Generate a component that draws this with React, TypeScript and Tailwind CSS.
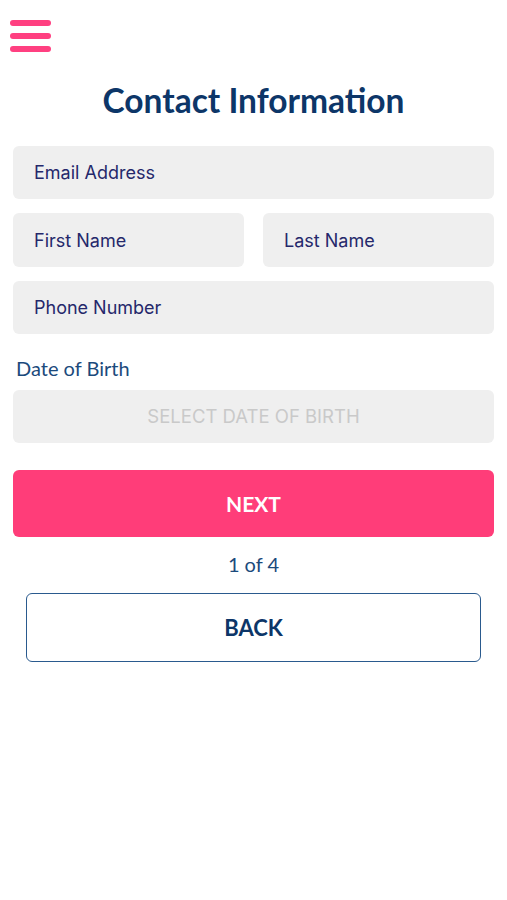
import React from "react";

export default function App() {
  return (
    <div className="w-[507px] h-[900px] bg-white" style={{ fontFamily: "Lato, 'Noto Sans', sans-serif" }}>
      <div className="pt-[20px] pl-[10px]">
        <div className="flex flex-col gap-[7px] w-[41px]">
          <div className="h-[6px] rounded-full bg-[#ff4081]" />
          <div className="h-[6px] rounded-full bg-[#ff4081]" />
          <div className="h-[6px] rounded-full bg-[#ff4081]" />
        </div>
      </div>
      <h1 className="mt-[28px] text-center text-[33.5px] leading-[40px] font-bold text-[#0d3668]">Contact Information</h1>
      <div className="px-[13px] mt-[26px] flex flex-col">
        <div className="h-[53px] rounded-[6px] bg-[#efefef] flex items-center pl-[21px] text-[18px] text-[#25286b]" style={{ fontFamily: "Inter, sans-serif" }}>Email Address</div>
        <div className="mt-[14px] flex gap-[19px]">
          <div className="flex-1 h-[54px] rounded-[6px] bg-[#efefef] flex items-center pl-[21px] text-[18px] text-[#25286b]" style={{ fontFamily: "Inter, sans-serif" }}>First Name</div>
          <div className="flex-1 h-[54px] rounded-[6px] bg-[#efefef] flex items-center pl-[21px] text-[18px] text-[#25286b]" style={{ fontFamily: "Inter, sans-serif" }}>Last Name</div>
        </div>
        <div className="mt-[14px] h-[53px] rounded-[6px] bg-[#efefef] flex items-center pl-[21px] text-[18px] text-[#25286b]" style={{ fontFamily: "Inter, sans-serif" }}>Phone Number</div>
        <div className="mt-[20px] pl-[3px] text-[20px] leading-[28px] text-[#1b4a7c]">Date of Birth</div>
        <div className="mt-[8px] h-[53px] rounded-[6px] bg-[#efefef] flex items-center justify-center text-[18.5px] text-[#c9c9c9]" style={{ fontFamily: "Inter, sans-serif" }}>SELECT DATE OF BIRTH</div>
        <div className="mt-[27px] h-[67px] rounded-[6px] bg-[#ff3d79] flex items-center justify-center text-[21px] font-bold text-white">NEXT</div>
        <div className="mt-[15px] text-center text-[20px] leading-[24px] text-[#1b4a7c]">1 of 4</div>
        <div className="mx-[13px] mt-[17px] h-[69px] rounded-[6px] border-[1.5px] border-[#2a5a8e] flex items-center justify-center text-[22px] font-bold text-[#0d3668]">BACK</div>
      </div>
    </div>
  );
}
